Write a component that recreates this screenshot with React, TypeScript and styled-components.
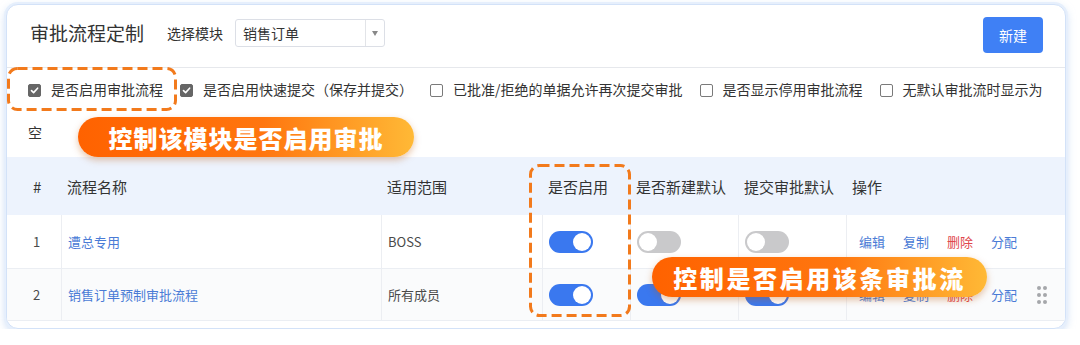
import React from 'react';
import styled, { createGlobalStyle } from 'styled-components';

const GlobalStyle = createGlobalStyle`
    body {
        margin: 0;
        background: #fff;
        font-family: "Noto Sans CJK SC", "Noto Sans", sans-serif;
        color: #333;
    }
`;

const Page = styled.div`
    padding: 4px 0 0 6px;
`;

const Card = styled.div`
    position: relative;
    width: 1060px;
    box-sizing: border-box;
    border: 1px solid #d3e2f8;
    border-radius: 12px;
    background: #fff;
    box-shadow: 0 0 0 2px #e6effc, 0 3px 10px rgba(150, 185, 235, 0.6);
    overflow: hidden;
`;

const Header = styled.div`
    display: flex;
    align-items: flex-start;
    height: 63px;
    box-sizing: border-box;
    padding: 14px 22px 0 23px;
    border-bottom: 1px solid #e6e8ec;
`;

const Title = styled.div`
    font-size: 19px;
    line-height: 28px;
    color: #333;
    margin-right: 23px;
`;

const FieldLabel = styled.div`
    font-size: 14px;
    line-height: 28px;
    margin-right: 12px;
`;

const Select = styled.div`
    display: flex;
    align-items: center;
    width: 150px;
    height: 28px;
    box-sizing: border-box;
    border: 1px solid #dcdfe6;
    border-radius: 3px;
    font-size: 14px;
    color: #333;
`;

const SelectValue = styled.div`
    flex: 1;
    padding-left: 7px;
`;

const SelectArrow = styled.div`
    width: 18px;
    height: 26px;
    border-left: 1px solid #e2e4e8;
    display: flex;
    align-items: center;
    justify-content: center;
    &::after {
        content: '';
        border-left: 3.5px solid transparent;
        border-right: 3.5px solid transparent;
        border-top: 5px solid #888;
    }
`;

const NewButton = styled.button`
    margin-left: auto;
    margin-top: -2px;
    width: 60px;
    height: 36px;
    border: none;
    border-radius: 4px;
    background: #3f80f5;
    color: #fff;
    font-family: inherit;
    font-size: 14px;
`;

const Options = styled.div`
    padding: 0 20px 3px 21px;
    font-size: 14px;
    line-height: 43px;
    color: #333;
`;

const Box = styled.span<{ checked?: boolean }>`
    display: inline-flex;
    align-items: center;
    justify-content: center;
    width: 13px;
    height: 13px;
    box-sizing: border-box;
    vertical-align: middle;
    margin: -2px 10px 0 0;
    border-radius: 2px;
    border: 1px solid ${p => (p.checked ? '#666' : '#7a7a7a')};
    background: ${p => (p.checked ? '#666' : '#fff')};
`;

const OptionText = styled.span`
    margin-right: 17px;
`;

const Table = styled.div`
    margin-bottom: 7px;
`;

const Row = styled.div<{ head?: boolean; alt?: boolean }>`
    display: grid;
    grid-template-columns: 54px 320px 161px 88px 108px 108px 1fr;
    height: ${p => (p.head ? '58px' : '53px')};
    box-sizing: border-box;
    background: ${p => (p.head ? '#edf3fd' : p.alt ? '#fafbfc' : '#fff')};
    border-top: ${p => (p.alt ? '1px solid #ebeef3' : 'none')};
    border-bottom: ${p => (p.alt ? '1px solid #ebeef3' : 'none')};
    font-size: ${p => (p.head ? '15px' : '13px')};
    color: ${p => (p.head ? '#333' : '#4a4a4a')};
`;

const Cell = styled.div<{ lined?: boolean; first?: boolean }>`
    display: flex;
    align-items: center;
    padding-left: ${p => (p.first ? '26px' : '6px')};
    border-left: ${p => (p.lined ? '1px solid #eceef2' : 'none')};
    white-space: nowrap;
`;

const OpsCell = styled(Cell)`
    padding-left: 12px;
    padding-right: 18px;
    gap: 18px;
`;

const Link = styled.span<{ danger?: boolean }>`
    color: ${p => (p.danger ? '#e0474c' : '#4a7bd6')};
`;

const Switch = styled.span<{ on?: boolean }>`
    position: relative;
    display: inline-block;
    width: 44px;
    height: 22px;
    border-radius: 11px;
    background: ${p => (p.on ? '#3a78ef' : '#c9c9cb')};
    &::after {
        content: '';
        position: absolute;
        top: 2px;
        left: ${p => (p.on ? '24px' : '2px')};
        width: 18px;
        height: 18px;
        border-radius: 50%;
        background: #fff;
    }
`;

const Handle = styled.div`
    margin-left: auto;
    display: grid;
    grid-template-columns: 4px 4px;
    gap: 3px 2px;
    & span {
        width: 4px;
        height: 4px;
        border-radius: 50%;
        background: #a5a7ab;
    }
`;

const Pill = styled.div<{ spacing: number }>`
    position: absolute;
    height: 40px;
    border-radius: 20px;
    background: linear-gradient(90deg, #ff6200 0%, #ff760f 55%, #ffb936 100%);
    box-shadow: 0 3px 7px rgba(190, 90, 10, 0.35);
    color: #fff;
    font-size: 24px;
    font-weight: 800;
    letter-spacing: ${p => p.spacing}px;
    display: flex;
    align-items: center;
    justify-content: center;
    white-space: nowrap;
`;

const DashFrame = styled.svg`
    position: absolute;
    overflow: visible;
`;

const Check = () => (
    <svg width="9" height="9" viewBox="0 0 9 9">
        <path d="M1.5 4.6 L3.6 6.6 L7.6 2.2" fill="none" stroke="#fff" strokeWidth="1.6" strokeLinecap="round" strokeLinejoin="round" />
    </svg>
);

const Dashed = ({ left, top, width, height }: { left: number; top: number; width: number; height: number }) => (
    <DashFrame style={{ left, top }} width={width} height={height}>
        <rect x="1.5" y="1.5" width={width - 3} height={height - 3} rx="9" fill="none" stroke="#f27a1c" strokeWidth="3" strokeDasharray="10 5" />
    </DashFrame>
);

const options = [
    { text: '是否启用审批流程', checked: true },
    { text: '是否启用快速提交（保存并提交）', checked: true },
    { text: '已批准/拒绝的单据允许再次提交审批', checked: false },
    { text: '是否显示停用审批流程', checked: false },
];

const rows = [
    { no: 1, name: '遭总专用', scope: 'BOSS', enabled: true, isNew: false, submit: false },
    { no: 2, name: '销售订单预制审批流程', scope: '所有成员', enabled: true, isNew: true, submit: true },
];

const App = () => (
    <Page>
        <GlobalStyle />
        <Card>
            <Header>
                <Title>审批流程定制</Title>
                <FieldLabel>选择模块</FieldLabel>
                <Select>
                    <SelectValue>销售订单</SelectValue>
                    <SelectArrow />
                </Select>
                <NewButton>新建</NewButton>
            </Header>
            <Options>
                {options.map(o => (
                    <React.Fragment key={o.text}>
                        <Box checked={o.checked}>{o.checked ? <Check /> : null}</Box>
                        <OptionText>{o.text}</OptionText>
                    </React.Fragment>
                ))}
                <Box />
                <span>无默认审批流时显示为</span>
                <br />
                <span>空</span>
            </Options>
            <Table>
                <Row head>
                    <Cell first>#</Cell>
                    <Cell>流程名称</Cell>
                    <Cell>适用范围</Cell>
                    <Cell>是否启用</Cell>
                    <Cell>是否新建默认</Cell>
                    <Cell>提交审批默认</Cell>
                    <Cell>操作</Cell>
                </Row>
                {rows.map(r => (
                    <Row key={r.no} alt={r.no === 2}>
                        <Cell first>{r.no}</Cell>
                        <Cell lined><Link>{r.name}</Link></Cell>
                        <Cell lined>{r.scope}</Cell>
                        <Cell lined><Switch on={r.enabled} /></Cell>
                        <Cell lined><Switch on={r.isNew} /></Cell>
                        <Cell lined><Switch on={r.submit} /></Cell>
                        <OpsCell lined>
                            <Link>编辑</Link>
                            <Link>复制</Link>
                            <Link danger>删除</Link>
                            <Link>分配</Link>
                            {r.no === 2 ? (
                                <Handle>
                                    <span /><span /><span /><span /><span /><span />
                                </Handle>
                            ) : null}
                        </OpsCell>
                    </Row>
                ))}
            </Table>
            <Dashed left={0} top={62} width={170} height={44} />
            <Dashed left={522} top={159} width={102} height={153} />
            <Pill spacing={1} style={{ left: 71, top: 112, width: 336 }}>控制该模块是否启用审批</Pill>
            <Pill spacing={2.6} style={{ left: 645, top: 252, width: 335 }}>控制是否启用该条审批流</Pill>
        </Card>
    </Page>
);

export default App;
